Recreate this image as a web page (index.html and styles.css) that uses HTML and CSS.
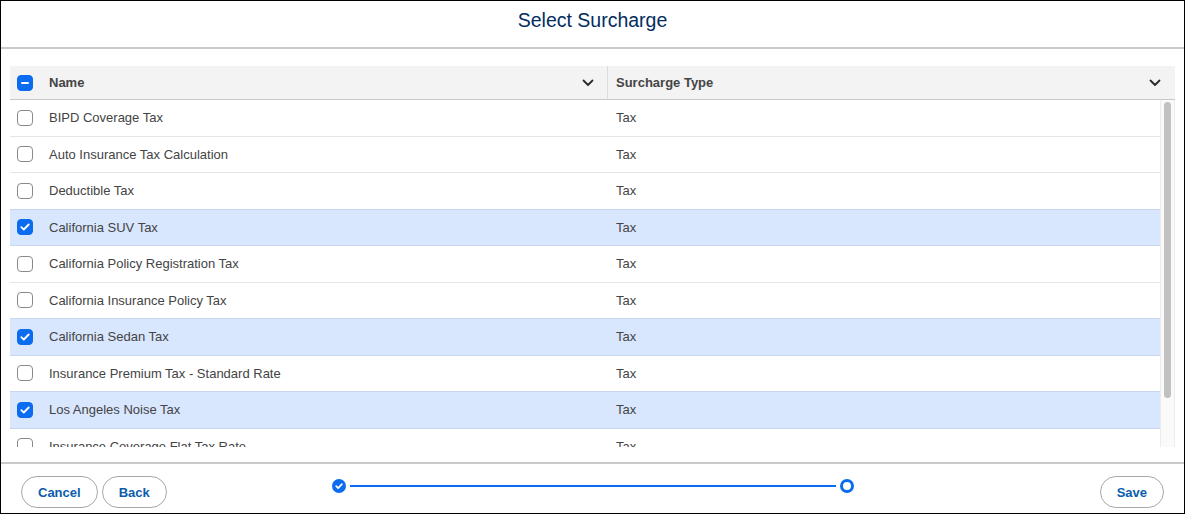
FILE: index.html
```html
<!DOCTYPE html>
<html lang="en">
<head>
  <meta charset="UTF-8">
  <title>Select Surcharge</title>
  <link rel="stylesheet" href="styles.css">
</head>
<body>
  <div class="modal">
    <div class="modal-header">
      <h2>Select Surcharge</h2>
    </div>

    <div class="modal-body">
      <div class="table">
        <div class="thead">
          <div class="cell cell-check">
            <span class="checkbox indeterminate"><span class="bar"></span></span>
          </div>
          <div class="cell cell-name th">
            <span>Name</span>
            <svg class="chevron" viewBox="0 0 12 8" width="12" height="8"><path d="M1.5 1.5 6 6l4.5-4.5" fill="none" stroke="#2b2b2b" stroke-width="1.8" stroke-linecap="round" stroke-linejoin="round"/></svg>
          </div>
          <div class="cell cell-type th">
            <span>Surcharge Type</span>
            <svg class="chevron" viewBox="0 0 12 8" width="12" height="8"><path d="M1.5 1.5 6 6l4.5-4.5" fill="none" stroke="#2b2b2b" stroke-width="1.8" stroke-linecap="round" stroke-linejoin="round"/></svg>
          </div>
        </div>

        <div class="tbody">
          <div class="rows">
            <div class="row">
              <div class="cell cell-check"><span class="checkbox"></span></div>
              <div class="cell cell-name">BIPD Coverage Tax</div>
              <div class="cell cell-type">Tax</div>
            </div>
            <div class="row">
              <div class="cell cell-check"><span class="checkbox"></span></div>
              <div class="cell cell-name">Auto Insurance Tax Calculation</div>
              <div class="cell cell-type">Tax</div>
            </div>
            <div class="row">
              <div class="cell cell-check"><span class="checkbox"></span></div>
              <div class="cell cell-name">Deductible Tax</div>
              <div class="cell cell-type">Tax</div>
            </div>
            <div class="row selected">
              <div class="cell cell-check"><span class="checkbox checked"><svg viewBox="0 0 10 8" width="10" height="8"><path d="M1.3 4.2 3.8 6.5 8.7 1.5" fill="none" stroke="#fff" stroke-width="1.8" stroke-linecap="round" stroke-linejoin="round"/></svg></span></div>
              <div class="cell cell-name">California SUV Tax</div>
              <div class="cell cell-type">Tax</div>
            </div>
            <div class="row">
              <div class="cell cell-check"><span class="checkbox"></span></div>
              <div class="cell cell-name">California Policy Registration Tax</div>
              <div class="cell cell-type">Tax</div>
            </div>
            <div class="row">
              <div class="cell cell-check"><span class="checkbox"></span></div>
              <div class="cell cell-name">California Insurance Policy Tax</div>
              <div class="cell cell-type">Tax</div>
            </div>
            <div class="row selected">
              <div class="cell cell-check"><span class="checkbox checked"><svg viewBox="0 0 10 8" width="10" height="8"><path d="M1.3 4.2 3.8 6.5 8.7 1.5" fill="none" stroke="#fff" stroke-width="1.8" stroke-linecap="round" stroke-linejoin="round"/></svg></span></div>
              <div class="cell cell-name">California Sedan Tax</div>
              <div class="cell cell-type">Tax</div>
            </div>
            <div class="row">
              <div class="cell cell-check"><span class="checkbox"></span></div>
              <div class="cell cell-name">Insurance Premium Tax - Standard Rate</div>
              <div class="cell cell-type">Tax</div>
            </div>
            <div class="row selected">
              <div class="cell cell-check"><span class="checkbox checked"><svg viewBox="0 0 10 8" width="10" height="8"><path d="M1.3 4.2 3.8 6.5 8.7 1.5" fill="none" stroke="#fff" stroke-width="1.8" stroke-linecap="round" stroke-linejoin="round"/></svg></span></div>
              <div class="cell cell-name">Los Angeles Noise Tax</div>
              <div class="cell cell-type">Tax</div>
            </div>
            <div class="row">
              <div class="cell cell-check"><span class="checkbox"></span></div>
              <div class="cell cell-name">Insurance Coverage Flat Tax Rate</div>
              <div class="cell cell-type">Tax</div>
            </div>
          </div>
          <div class="scrollbar"><div class="thumb"></div></div>
        </div>
      </div>
    </div>

    <div class="modal-footer">
      <div class="footer-left">
        <button class="btn">Cancel</button>
        <button class="btn">Back</button>
      </div>
      <div class="progress">
        <span class="step done"><svg viewBox="0 0 14 14" width="14" height="14"><circle cx="7" cy="7" r="7" fill="#0b6cf0"/><path d="M4.2 7.2 6.2 9.1 9.9 5.2" fill="none" stroke="#fff" stroke-width="1.7" stroke-linecap="round" stroke-linejoin="round"/></svg></span>
        <span class="line"></span>
        <span class="step current"></span>
      </div>
      <div class="footer-right">
        <button class="btn">Save</button>
      </div>
    </div>
  </div>
</body>
</html>
```

FILE: styles.css
```css
*{box-sizing:border-box}
body{margin:0;font-family:"Liberation Sans",Arial,sans-serif;color:#444;background:#fff}
.modal{width:1185px;height:514px;border:1px solid #000;display:flex;flex-direction:column;background:#fff}

.modal-header{height:48px;border-bottom:2px solid #c9c9c9;padding-top:7px}
.modal-header h2{margin:0;text-align:center;font-size:19.5px;line-height:24px;font-weight:normal;color:#032d60}

.modal-body{flex:1;padding:17px 9px 15px 9px;display:flex;flex-direction:column;min-height:0}
.table{flex:1;display:flex;flex-direction:column;min-height:0}

.thead{display:grid;grid-template-columns:32px 566px 1fr;height:34px;background:#f3f3f3;border-bottom:1px solid #c9c9c9}
.tbody{flex:1;display:flex;min-height:0}
.rows{flex:1;overflow:hidden}
.row{display:grid;grid-template-columns:32px 566px 1fr;height:36.5px;border-bottom:1px solid #e5e5e5;background:#fff}
.row.selected{background:#d8e6fe;border-bottom-color:#c8d6ee}
.row:has(+ .selected){border-bottom-color:#c8d6ee}

.cell{display:flex;align-items:center;font-size:13px;white-space:nowrap}
.cell-check{padding-left:7px}
.cell-name{padding-left:7px}
.cell-type{padding-left:8px}
.th{font-weight:bold;justify-content:space-between}
.thead .cell-name{border-right:1px solid #dcdcdc;padding-right:13px}
.thead .cell-type{padding-right:14px}
.chevron{display:block}

.checkbox{width:16px;height:16px;border:1px solid #8a8a8a;border-radius:4px;background:#fff;display:flex;align-items:center;justify-content:center}
.checkbox.checked,.checkbox.indeterminate{background:#0b6cf0;border-color:#0b6cf0}
.checkbox .bar{width:8px;height:2px;background:#fff;border-radius:1px}

.scrollbar{width:15px;background:#fafafa;border-left:1px solid #ececec;border-right:1px solid #ececec;padding:2px 3px 0 3px}
.thumb{height:296px;background:#c1c1c1;border-radius:4px}

.modal-footer{height:51px;border-top:2px solid #c9c9c9;padding:12px 20px 0 20px;display:grid;grid-template-columns:1fr 522px 1fr;align-items:start}
.footer-left{display:flex;gap:4px}
.footer-right{display:flex;justify-content:flex-end}
.btn{height:32px;padding:0 16px;border:1px solid #a8a8a8;border-radius:16px;background:#fff;color:#0b5cab;font-family:"Liberation Sans",Arial,sans-serif;font-size:13px;font-weight:bold;cursor:pointer}

.progress{display:flex;align-items:center;height:14px;margin-top:3px}
.step{width:14px;height:14px;flex:none;display:block}
.step svg{display:block}
.step.current{border:3px solid #0b6cf0;border-radius:50%;background:#fff}
.line{flex:1;height:2px;background:#0b6cf0;margin:0 4px}
```
